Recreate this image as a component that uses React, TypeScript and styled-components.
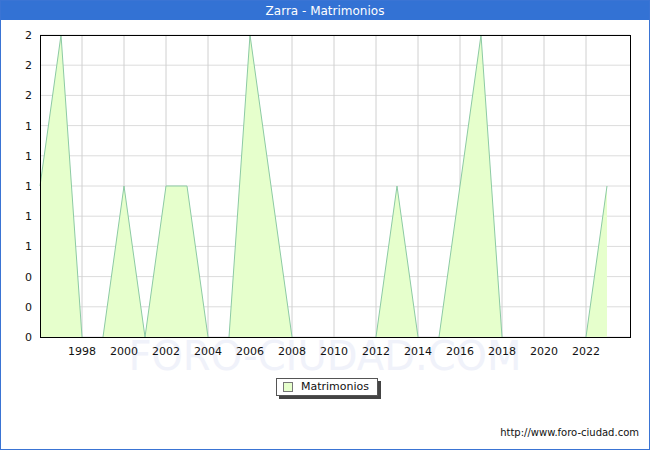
import React from 'react';
import styled, { createGlobalStyle } from 'styled-components';

const Global = createGlobalStyle`
    body { margin: 0; font-family: "DejaVu Sans", sans-serif; background: #fff; }
`;

const Frame = styled.div`
    width: 650px;
    height: 450px;
    box-sizing: border-box;
    border: 1px solid #3a74d4;
    display: flex;
    flex-direction: column;
    background: #fff;
`;

const TitleBar = styled.div`
    height: 19px;
    flex: none;
    background: #3372d4;
    color: #fff;
    font-size: 12px;
    display: flex;
    align-items: center;
    justify-content: center;
`;

const Legend = styled.div`
    align-self: center;
    margin: 3px 0 0 4px;
    display: flex;
    align-items: center;
    gap: 8px;
    padding: 1px 8px 2px 6px;
    border: 1px solid #555;
    box-shadow: 3px 3px 0 #444;
    font-size: 11px;
    color: #111;
    background: #fff;
`;

const Swatch = styled.span`
    width: 8px;
    height: 8px;
    background: #e6ffcc;
    border: 1px solid #777;
`;

const Footer = styled.div`
    margin-top: auto;
    padding: 0 10px 11px 0;
    text-align: right;
    font-size: 10px;
    color: #111;
`;

const values = [1, 2, 0, 0, 1, 0, 1, 1, 0, 0, 2, 1, 0, 0, 0, 0, 0, 1, 0, 0, 1, 2, 0, 0, 0, 0, 0, 1];
const X0 = 39, STEP = 21, Y0 = 317, H = 302;
const px = (i: number) => X0 + i * STEP;
const py = (v: number) => Y0 - (v / 2) * H;

const Chart = () => {
    const fill = `${px(0)},${Y0} ` + values.map((v, i) => `${px(i)},${py(v)}`).join(' ') + ` ${px(values.length - 1)},${Y0}`;
    const segs = values.slice(1).map((v, k) => {
        const a = values[k];
        if (a === 0 && v === 0) return null;
        return <line key={k} x1={px(k)} y1={py(a)} x2={px(k + 1)} y2={py(v)} stroke="#8ccaa4" strokeWidth={1} />;
    });
    const yLabels = ['2', '2', '2', '1', '1', '1', '1', '1', '0', '0', '0'];
    return (
        <svg width={648} height={355} style={{ display: 'block', flex: 'none' }}>
            <text x={324} y={350} textAnchor="middle" fontSize={40} fill="#f0f2fa" fontFamily="DejaVu Sans">FORO-CIUDAD.COM</text>
            {yLabels.map((l, i) => {
                const y = 15 + i * 30.2;
                return (
                    <g key={i}>
                        <line x1={39} x2={629} y1={y} y2={y} stroke="#dcdcdc" />
                        <text x={31} y={y + 4} textAnchor="end" fontSize={11} fill="#111">{l}</text>
                    </g>
                );
            })}
            {Array.from({ length: 13 }, (_, k) => {
                const x = px(2 + 2 * k);
                return (
                    <g key={k}>
                        <line x1={x} x2={x} y1={15} y2={317} stroke="#d0d0d0" />
                        <text x={x} y={335} textAnchor="middle" fontSize={11} fill="#111">{1998 + 2 * k}</text>
                    </g>
                );
            })}
            <polygon points={fill} fill="#e6ffcc" />
            {segs}
            <rect x={39.5} y={15.5} width={590} height={302} fill="none" stroke="#000" />
        </svg>
    );
};

export default function App() {
    return (
        <>
            <Global />
            <Frame>
                <TitleBar>Zarra - Matrimonios</TitleBar>
                <Chart />
                <Legend><Swatch />Matrimonios</Legend>
                <Footer>http://www.foro-ciudad.com</Footer>
            </Frame>
        </>
    );
}
